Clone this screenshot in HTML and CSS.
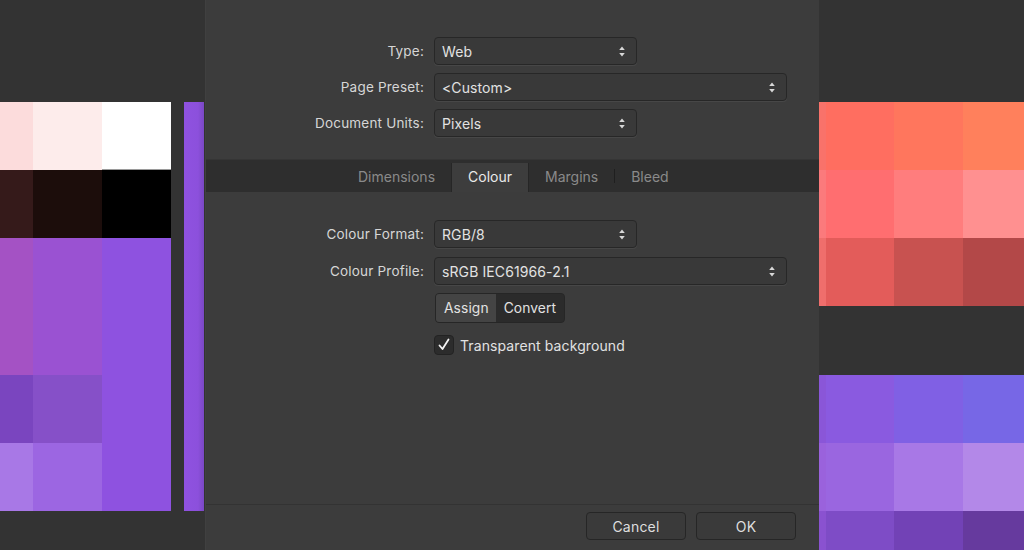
FILE: index.html
```html
<!DOCTYPE html>
<html>
<head>
<meta charset="utf-8">
<link rel="stylesheet" href="styles.css">
</head>
<body>
<div class="stage">
  <div class="left">
    <div class="lgrid">
      <div class="sw" style="background:#fcdcdc"></div>
      <div class="sw" style="background:#fdeceb"></div>
      <div class="sw white" style="background:#ffffff"></div>
      <div class="sw" style="background:#351a1a"></div>
      <div class="sw" style="background:#1c0d0b"></div>
      <div class="sw" style="background:#000000"></div>
      <div class="sw" style="background:#a452c4"></div>
      <div class="sw" style="background:#9a52d2"></div>
      <div class="sw tall" style="background:#8e52e0"></div>
      <div class="sw" style="background:#7a45bf"></div>
      <div class="sw" style="background:#8650c8"></div>
      <div class="sw" style="background:#a878e6"></div>
      <div class="sw" style="background:#9c66e2"></div>
    </div>
    <div class="strip"></div>
  </div>

  <div class="dialog">
    <div class="section top">
      <div class="row">
        <div class="label">Type:</div>
        <div class="popup short"><span>Web</span><svg class="arr" width="6" height="11" viewBox="0 0 6 11"><path d="M3 0.5 L5.8 4 L0.2 4 Z M3 10.5 L5.8 7 L0.2 7 Z" fill="#d8d8d8"/></svg></div>
      </div>
      <div class="row">
        <div class="label">Page Preset:</div>
        <div class="popup long"><span>&lt;Custom&gt;</span><svg class="arr" width="6" height="11" viewBox="0 0 6 11"><path d="M3 0.5 L5.8 4 L0.2 4 Z M3 10.5 L5.8 7 L0.2 7 Z" fill="#d8d8d8"/></svg></div>
      </div>
      <div class="row">
        <div class="label">Document Units:</div>
        <div class="popup short"><span>Pixels</span><svg class="arr" width="6" height="11" viewBox="0 0 6 11"><path d="M3 0.5 L5.8 4 L0.2 4 Z M3 10.5 L5.8 7 L0.2 7 Z" fill="#d8d8d8"/></svg></div>
      </div>
    </div>

    <div class="tabbar">
      <div class="tab">Dimensions</div>
      <div class="tab active">Colour</div>
      <div class="tab">Margins</div>
      <div class="tabsep"></div>
      <div class="tab">Bleed</div>
    </div>

    <div class="section body">
      <div class="row">
        <div class="label">Colour Format:</div>
        <div class="popup short"><span>RGB/8</span><svg class="arr" width="6" height="11" viewBox="0 0 6 11"><path d="M3 0.5 L5.8 4 L0.2 4 Z M3 10.5 L5.8 7 L0.2 7 Z" fill="#d8d8d8"/></svg></div>
      </div>
      <div class="row">
        <div class="label">Colour Profile:</div>
        <div class="popup long"><span>sRGB IEC61966-2.1</span><svg class="arr" width="6" height="11" viewBox="0 0 6 11"><path d="M3 0.5 L5.8 4 L0.2 4 Z M3 10.5 L5.8 7 L0.2 7 Z" fill="#d8d8d8"/></svg></div>
      </div>
      <div class="row seg-row">
        <div class="label"></div>
        <div class="segmented">
          <div class="seg">Assign</div>
          <div class="seg on">Convert</div>
        </div>
      </div>
      <div class="row check-row">
        <div class="label"></div>
        <div class="check">
          <div class="box"><svg width="14" height="14" viewBox="0 0 14 14"><path d="M2.5 7.5 L5.5 11 L11.5 1.5" fill="none" stroke="#f2f2f2" stroke-width="1.8" stroke-linecap="round" stroke-linejoin="round"/></svg></div>
          <span>Transparent background</span>
        </div>
      </div>
    </div>

    <div class="footer">
      <div class="btn">Cancel</div>
      <div class="btn">OK</div>
    </div>
  </div>

  <div class="right">
    <div class="rgrid">
      <div class="edge" style="background:#f9726a"></div>
      <div class="sw" style="background:#ff6e60"></div>
      <div class="sw" style="background:#ff765d"></div>
      <div class="sw" style="background:#ff805c"></div>
      <div class="edge" style="background:#fb7a7c"></div>
      <div class="sw" style="background:#ff6e70"></div>
      <div class="sw" style="background:#ff7d7d"></div>
      <div class="sw" style="background:#ff9090"></div>
      <div class="edge" style="background:#ef6e6c"></div>
      <div class="sw" style="background:#e35c5a"></div>
      <div class="sw" style="background:#c85250"></div>
      <div class="sw" style="background:#b34848"></div>
      <div class="gap"></div>
      <div class="edge" style="background:#8a56d8"></div>
      <div class="sw" style="background:#8a5ae0"></div>
      <div class="sw" style="background:#8060e4"></div>
      <div class="sw" style="background:#7767e6"></div>
      <div class="edge" style="background:#9a62dc"></div>
      <div class="sw" style="background:#9a66e0"></div>
      <div class="sw" style="background:#a878e6"></div>
      <div class="sw" style="background:#b388e8"></div>
      <div class="edge" style="background:#8a52d0"></div>
      <div class="sw" style="background:#7e4cc6"></div>
      <div class="sw" style="background:#7242b6"></div>
      <div class="sw" style="background:#663a9e"></div>
    </div>
  </div>
</div>
</body>
</html>
```

FILE: styles.css
```css
* { box-sizing: border-box; }
html, body { margin: 0; padding: 0; }
body {
  width: 1024px;
  height: 550px;
  overflow: hidden;
  background: #333333;
  font-family: Inter, "Liberation Sans", sans-serif;
  font-size: 13.5px;
  color: #dcdcdc;
}
.stage {
  display: grid;
  grid-template-columns: 205px 614px 205px;
  height: 550px;
}

/* left swatches */
.left {
  padding-top: 102px;
  display: flex;
  align-items: flex-start;
}
.lgrid {
  display: grid;
  grid-template-columns: 33px 69px 69px;
  grid-template-rows: 68px 68px 137px 68px 68px;
}
.lgrid .white { box-shadow: inset 0 -1px 0 #9a9a9a; }
.lgrid .tall { grid-column: 3; grid-row: 3 / span 3; }
.strip {
  width: 20px;
  height: 409px;
  margin-left: 13px;
  background: linear-gradient(90deg, #8f52e0 0%, #8c50dc 70%, #7a48c4 100%);
}

/* right swatches */
.right { padding-top: 102px; }
.rgrid {
  display: grid;
  grid-template-columns: 7px 68px 69px 61px;
  grid-template-rows: 68px 68px 68px 69px 68px 68px 40px;
}
.rgrid .gap { grid-column: 1 / span 4; background: #333333; }

/* dialog */
.dialog {
  background: #3c3c3c;
  display: flex;
  flex-direction: column;
  height: 550px;
  border-left: 1px solid #404040;
}
.section { display: flex; flex-direction: column; }
.top { padding-top: 37px; gap: 8px; height: 159px; }
.row { display: flex; align-items: center; }
.label {
  width: 228px;
  text-align: right;
  padding-right: 10px;
  color: #d6d6d6;
  letter-spacing: 0.2px;
}
.popup {
  height: 28px;
  background: #393939;
  border: 1px solid #272727;
  border-radius: 4px;
  box-shadow: 0 1px 0 #474747;
  display: flex;
  align-items: center;
  justify-content: space-between;
  padding: 0 11px 0 7px;
  font-size: 14px;
  color: #e2e2e2;
  letter-spacing: 0.1px;
}
.popup.short { width: 203px; }
.popup.long { width: 353px; }
.popup span { padding-top: 1px; }

.tabbar {
  height: 33px;
  background: #2e2e2e;
  border-top: 1px solid #353535;
  display: flex;
  align-items: stretch;
  padding-left: 136px;
  font-size: 14px;
}
.tab {
  display: flex;
  align-items: center;
  padding: 0 16px;
  color: #8a8a8a;
}
.tab.active {
  background: #3d3d3d;
  color: #eaeaea;
  margin-top: 3px;
  padding-bottom: 3px;
  border-left: 1px solid #262626;
  border-right: 1px solid #262626;
}
.tabsep {
  width: 1px;
  background: #1f1f1f;
  margin: 9px 0;
}

.body { padding-top: 28px; gap: 9px; flex: 1; }
.seg-row { margin-top: -1px; }
.segmented {
  margin-left: 1px;
  display: flex;
  height: 30px;
  border: 1px solid #262626;
  border-radius: 4px;
  overflow: hidden;
  font-size: 13.8px;
  background: #2a2a2a;
}
.seg {
  display: flex;
  align-items: center;
  padding: 0 7px 0 8px;
  color: #e2e2e2;
  background: #444444;
  letter-spacing: 0.1px;
}
.seg.on { background: #2b2b2b; padding: 0 8px 0 8px; }
.check-row { margin-top: 3px; }
.check { display: flex; align-items: center; gap: 6px; font-size: 14px; color: #e2e2e2; letter-spacing: 0.1px; }
.box {
  width: 20px;
  height: 20px;
  background: #2c2c2c;
  border: 1px solid #232323;
  border-radius: 4px;
  display: flex;
  align-items: center;
  justify-content: center;
}

.footer {
  height: 46px;
  border-top: 1px solid #333333;
  display: flex;
  justify-content: flex-end;
  align-items: flex-start;
  gap: 10px;
  padding: 7px 23px 0 0;
}
.btn {
  width: 100px;
  height: 28px;
  border: 1px solid #262626;
  border-radius: 4px;
  background: #3a3a3a;
  display: flex;
  align-items: center;
  justify-content: center;
  font-size: 14px;
  color: #dedede;
  letter-spacing: 0.2px;
}
```
